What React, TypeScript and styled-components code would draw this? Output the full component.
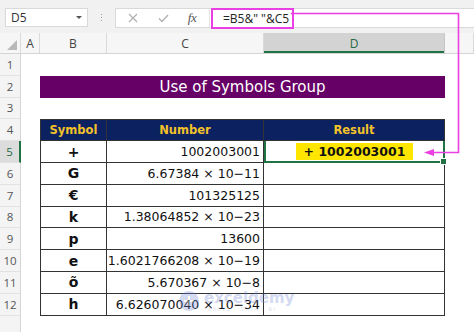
import React from "react";
import styled, { createGlobalStyle } from "styled-components";

const Global = createGlobalStyle`
  html, body { margin: 0; padding: 0; background: #fff; }
  body { width: 474px; height: 332px; overflow: hidden; font-family: "Open Sans", "Noto Sans", sans-serif; }
`;

const Page = styled.div`
  position: relative;
  width: 474px;
  height: 332px;
  overflow: hidden;
  background: #fff;
`;

const Toolbar = styled.div`
  height: 33px;
  box-sizing: border-box;
  background: #f1f1f1;
  display: flex;
  align-items: flex-start;
  padding: 8px 0 0 5px;
`;

const NameBox = styled.div`
  width: 83px;
  height: 19px;
  box-sizing: border-box;
  background: #fff;
  border: 1px solid #d9d9d9;
  display: flex;
  align-items: center;
  justify-content: space-between;
  padding: 0 5px 0 5px;
  font-size: 12px;
  color: #333;
`;

const Caret = styled.span`
  width: 0;
  height: 0;
  border-left: 3px solid transparent;
  border-right: 3px solid transparent;
  border-top: 3px solid #555;
`;

const Dots = styled.div`
  width: 27px;
  height: 19px;
  display: flex;
  flex-direction: column;
  align-items: center;
  justify-content: center;
  gap: 2px;
  & > span { width: 1px; height: 1px; background: #9a9a9a; }
`;

const FormulaBar = styled.div`
  flex: 1;
  height: 20px;
  box-sizing: border-box;
  background: #fff;
  border: 1px solid #d9d9d9;
  border-right: none;
  display: flex;
  align-items: center;
`;

const IconGroup = styled.div`
  width: 93px;
  height: 100%;
  display: flex;
  align-items: center;
  border-right: 1px solid #e4e4e4;
`;

const IconSlot = styled.div<{ $w: number }>`
  width: ${(p) => p.$w}px;
  display: flex;
  justify-content: center;
  align-items: center;
`;

const Fx = styled.span`
  font-family: "Liberation Serif", serif;
  font-style: italic;
  font-size: 13px;
  color: #555;
  letter-spacing: -0.5px;
`;

const FormulaBox = styled.div`
  margin-left: 1px;
  width: 83px;
  height: 21px;
  box-sizing: border-box;
  border: 2px solid #ea3fe2;
  display: flex;
  align-items: center;
  padding-left: 10px;
  font-size: 12px;
  color: #222;
  white-space: nowrap;
`;

const COLS = "21px 19px 67px 157px 181px 1fr";

const HeaderRow = styled.div`
  display: grid;
  grid-template-columns: ${COLS};
  height: 21px;
  background: #f6f6f6;
  border-bottom: 1px solid #d4d4d4;
  box-sizing: border-box;
`;

const ColHead = styled.div<{ $active?: boolean }>`
  display: flex;
  align-items: center;
  justify-content: center;
  font-size: 12px;
  color: ${(p) => (p.$active ? "#1e6b44" : "#444")};
  background: ${(p) => (p.$active ? "#d3d3d3" : "transparent")};
  border-right: 1px solid ${(p) => (p.$active ? "#c6c6c6" : "#dadada")};
  box-shadow: ${(p) => (p.$active ? "inset 0 -2px 0 #217346" : "none")};
`;

const Corner = styled.div`
  position: relative;
  border-right: 1px solid #dadada;
  &::after {
    content: "";
    position: absolute;
    right: 3px;
    bottom: 3px;
    width: 0;
    height: 0;
    border-left: 10px solid transparent;
    border-bottom: 10px solid #b9b9b9;
  }
`;

const Row = styled.div`
  display: grid;
  grid-template-columns: ${COLS};
  height: 21.8px;
`;

const RowHead = styled.div<{ $active?: boolean }>`
  display: flex;
  align-items: center;
  justify-content: center;
  font-size: 11.5px;
  color: ${(p) => (p.$active ? "#1e6b44" : "#555")};
  background: ${(p) => (p.$active ? "#dcdcdc" : "#f4f4f4")};
  border-right: ${(p) => (p.$active ? "2px solid #217346" : "1px solid #d4d4d4")};
  border-bottom: 1px solid #e2e2e2;
  box-sizing: border-box;
`;

const Blank = styled.div``;

const Title = styled.div`
  grid-column: 3 / 6;
  background: #660066;
  color: #fff;
  display: flex;
  align-items: center;
  justify-content: center;
  font-family: "DejaVu Sans", sans-serif;
  font-size: 15px;
`;

const Cell = styled.div<{ $align?: "center" | "right"; $head?: boolean; $bold?: boolean; $first?: boolean; $top?: boolean }>`
  box-sizing: border-box;
  display: flex;
  align-items: center;
  justify-content: ${(p) => (p.$align === "right" ? "flex-end" : "center")};
  padding-right: ${(p) => (p.$align === "right" ? "3px" : "0")};
  border-right: 1px solid #333;
  border-bottom: 1px solid #333;
  border-left: ${(p) => (p.$first ? "1px solid #333" : "none")};
  border-top: ${(p) => (p.$top ? "1px solid #333" : "none")};
  background: ${(p) => (p.$head ? "#0b2160" : "#fff")};
  color: ${(p) => (p.$head ? "#f3c22a" : "#111")};
  font-family: "DejaVu Sans", sans-serif;
  font-size: ${(p) => (p.$head ? "11.5px" : p.$bold ? "14px" : "12.5px")};
  font-weight: ${(p) => (p.$head || p.$bold ? 700 : 400)};
  white-space: nowrap;
`;

const Selected = styled(Cell)`
  position: relative;
  border: 2px solid #217346;
  border-top: none;
  &::after {
    content: "";
    position: absolute;
    right: -4px;
    bottom: -4px;
    width: 5px;
    height: 5px;
    background: #217346;
    border: 1px solid #fff;
  }
`;

const Highlight = styled.span`
  background: #ffe600;
  padding: 1px 8px;
  font-size: 12.5px;
  font-weight: 700;
`;

const Overlay = styled.svg`
  position: absolute;
  left: 0;
  top: 0;
  pointer-events: none;
`;

const Watermark = styled.div`
  position: absolute;
  left: 178px;
  top: 290px;
  display: flex;
  align-items: center;
  gap: 4px;
  opacity: 0.3;
  pointer-events: none;
`;

const WmWords = styled.div`
  display: flex;
  flex-direction: column;
`;

const WmText = styled.span`
  font-family: "DejaVu Sans", sans-serif;
  font-size: 15px;
  font-weight: 700;
  color: #6f86d6;
  line-height: 16px;
`;

const WmSub = styled.span`
  font-family: "DejaVu Sans", sans-serif;
  font-size: 5px;
  letter-spacing: 1.5px;
  color: #8a9ad0;
  margin-left: 4px;
`;

const data: [string, string][] = [
  ["G", "6.67384 × 10−11"],
  ["€", "101325125"],
  ["k", "1.38064852 × 10−23"],
  ["p", "13600"],
  ["e", "1.6021766208 × 10−19"],
  ["õ", "5.670367 × 10−8"],
  ["h", "6.626070040 × 10−34"],
];

export default function App() {
  return (
    <Page>
      <Global />
      <Toolbar>
        <NameBox>
          D5
          <Caret />
        </NameBox>
        <Dots>
          <span />
          <span />
          <span />
        </Dots>
        <FormulaBar>
          <IconGroup>
            <IconSlot $w={34}>
              <svg width="10" height="10" viewBox="0 0 10 10">
                <path d="M1 1 L9 9 M9 1 L1 9" stroke="#b0b0b0" strokeWidth="1.2" />
              </svg>
            </IconSlot>
            <IconSlot $w={26}>
              <svg width="11" height="9" viewBox="0 0 11 9">
                <path d="M1 4.5 L4 7.5 L10 1" stroke="#b0b0b0" strokeWidth="1.3" fill="none" />
              </svg>
            </IconSlot>
            <IconSlot $w={32}>
              <Fx>fx</Fx>
            </IconSlot>
          </IconGroup>
          <FormulaBox>=B5&amp;" "&amp;C5</FormulaBox>
        </FormulaBar>
      </Toolbar>

      <HeaderRow>
        <Corner />
        <ColHead>A</ColHead>
        <ColHead>B</ColHead>
        <ColHead>C</ColHead>
        <ColHead $active>D</ColHead>
        <ColHead />
      </HeaderRow>

      <Row>
        <RowHead>1</RowHead>
        <Blank />
      </Row>
      <Row>
        <RowHead>2</RowHead>
        <Blank />
        <Title>Use of Symbols Group</Title>
      </Row>
      <Row>
        <RowHead>3</RowHead>
        <Blank />
      </Row>
      <Row>
        <RowHead>4</RowHead>
        <Blank />
        <Cell $head $first $top>Symbol</Cell>
        <Cell $head $top>Number</Cell>
        <Cell $head $top>Result</Cell>
      </Row>
      <Row>
        <RowHead $active>5</RowHead>
        <Blank />
        <Cell $bold $first>+</Cell>
        <Cell $align="right">1002003001</Cell>
        <Selected>
          <Highlight>+ 1002003001</Highlight>
        </Selected>
      </Row>
      {data.map(([sym, num], i) => (
        <Row key={sym}>
          <RowHead>{i + 6}</RowHead>
          <Blank />
          <Cell $bold $first>{sym}</Cell>
          <Cell $align="right">{num}</Cell>
          <Cell />
        </Row>
      ))}
      <Row>
        <RowHead />
        <Blank />
      </Row>

      <Watermark>
        <svg width="22" height="22" viewBox="0 0 22 22">
          <circle cx="11" cy="11" r="10" fill="#6f86d6" />
          <path d="M6 11 L16 11 M11 6 L11 16" stroke="#fff" strokeWidth="2" />
        </svg>
        <WmWords>
          <WmText>exceldemy</WmText>
          <WmSub>EXCEL · DATA · BI</WmSub>
        </WmWords>
      </Watermark>

      <Overlay width="474" height="332" viewBox="0 0 474 332">
        <polyline
          points="291,13.5 458.5,13.5 458.5,152.5 432,152.5"
          fill="none"
          stroke="#ea3fe2"
          strokeWidth="1.6"
        />
        <polygon points="424,152.5 434,149 434,156" fill="#ea3fe2" />
      </Overlay>
    </Page>
  );
}
